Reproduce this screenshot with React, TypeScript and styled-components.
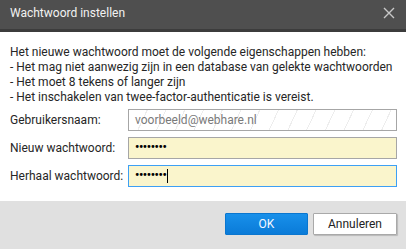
import React from "react";
import styled, { createGlobalStyle } from "styled-components";

const Global = createGlobalStyle`
  html, body { margin: 0; padding: 0; background: #ffffff; }
  body { font-family: Roboto, "Liberation Sans", sans-serif; }
  * { box-sizing: border-box; }
`;

const Dialog = styled.div`
  width: 406px;
  height: 249px;
  display: flex;
  flex-direction: column;
  background: #ffffff;
  font-size: 12px;
  color: #262626;
`;

const TitleBar = styled.div`
  height: 32px;
  flex: none;
  display: flex;
  align-items: center;
  justify-content: space-between;
  padding: 0 10px 3px 10px;
  background: #4f4f4f;
  border-bottom: 3px solid #3c3c3c;
  color: #f2f2f2;
`;

const Title = styled.span`
  font-size: 12px;
`;

const CloseIcon = styled.svg`
  width: 12px;
  height: 12px;
  margin-right: 1px;
  display: block;
`;

const Body = styled.div`
  flex: 1;
  padding: 13px 9px 0 10px;
  display: flex;
  flex-direction: column;
`;

const Intro = styled.div`
  line-height: 15px;
  margin-bottom: 4px;
  white-space: nowrap;
`;

const Form = styled.div`
  display: grid;
  grid-template-columns: 118px 269px;
  row-gap: 6px;
  align-items: center;
`;

const Label = styled.div`
  line-height: 22px;
  white-space: nowrap;
`;

const Field = styled.div<{ $variant: "readonly" | "filled" | "focused" }>`
  height: 22px;
  display: flex;
  align-items: center;
  padding: 0 6px;
  border: 1px solid ${(p) => (p.$variant === "focused" ? "#3da0f5" : "#a6a6a6")};
  color: ${(p) => (p.$variant === "readonly" ? "#7a7a7a" : "#000000")};
  background: ${(p) =>
    p.$variant === "readonly"
      ? "repeating-linear-gradient(115deg, #ffffff 0px, #ffffff 16px, #ededed 16px, #ededed 17px)"
      : "#faf5cc"};
  white-space: nowrap;
`;

const Dots = styled.span`
  font-size: 12px;
  font-weight: bold;
  letter-spacing: -0.4px;
  position: relative;
  top: -1px;
`;

const Caret = styled.span`
  display: inline-block;
  width: 1px;
  height: 14px;
  margin-left: 1px;
  background: #000000;
`;

const Footer = styled.div`
  height: 48px;
  flex: none;
  display: flex;
  justify-content: flex-end;
  align-items: flex-start;
  gap: 5px;
  padding: 12px 9px 0 0;
  background: #e0e0e0;
`;

const Button = styled.button<{ $primary?: boolean }>`
  height: 22px;
  width: ${(p) => (p.$primary ? "83px" : "84px")};
  font-family: Roboto, "Liberation Sans", sans-serif;
  font-size: 12px;
  padding: 0;
  border-radius: 1px;
  border: 1px solid ${(p) => (p.$primary ? "#0a76cf" : "#a9a9a9")};
  background: ${(p) => (p.$primary ? "linear-gradient(#1890ea, #0a7bd8)" : "#ffffff")};
  color: ${(p) => (p.$primary ? "#f4f8ff" : "#222222")};
  box-shadow: ${(p) => (p.$primary ? "none" : "1px 1px 1px rgba(0,0,0,0.18)")};
`;

export default function App() {
  return (
    <>
      <Global />
      <Dialog>
        <TitleBar>
          <Title>Wachtwoord instellen</Title>
          <CloseIcon viewBox="0 0 12 12">
            <path d="M1 1 L11 11 M11 1 L1 11" stroke="#c8c8c8" strokeWidth="1.4" />
          </CloseIcon>
        </TitleBar>
        <Body>
          <Intro>
            Het nieuwe wachtwoord moet de volgende eigenschappen hebben:
            <br />- Het mag niet aanwezig zijn in een database van gelekte wachtwoorden
            <br />- Het moet 8 tekens of langer zijn
            <br />- Het inschakelen van twee-factor-authenticatie is vereist.
          </Intro>
          <Form>
            <Label>Gebruikersnaam:</Label>
            <Field $variant="readonly">voorbeeld@webhare.nl</Field>
            <Label>Nieuw wachtwoord:</Label>
            <Field $variant="filled">
              <Dots>••••••••</Dots>
            </Field>
            <Label>Herhaal wachtwoord:</Label>
            <Field $variant="focused">
              <Dots>••••••••</Dots>
              <Caret />
            </Field>
          </Form>
        </Body>
        <Footer>
          <Button $primary>OK</Button>
          <Button>Annuleren</Button>
        </Footer>
      </Dialog>
    </>
  );
}
